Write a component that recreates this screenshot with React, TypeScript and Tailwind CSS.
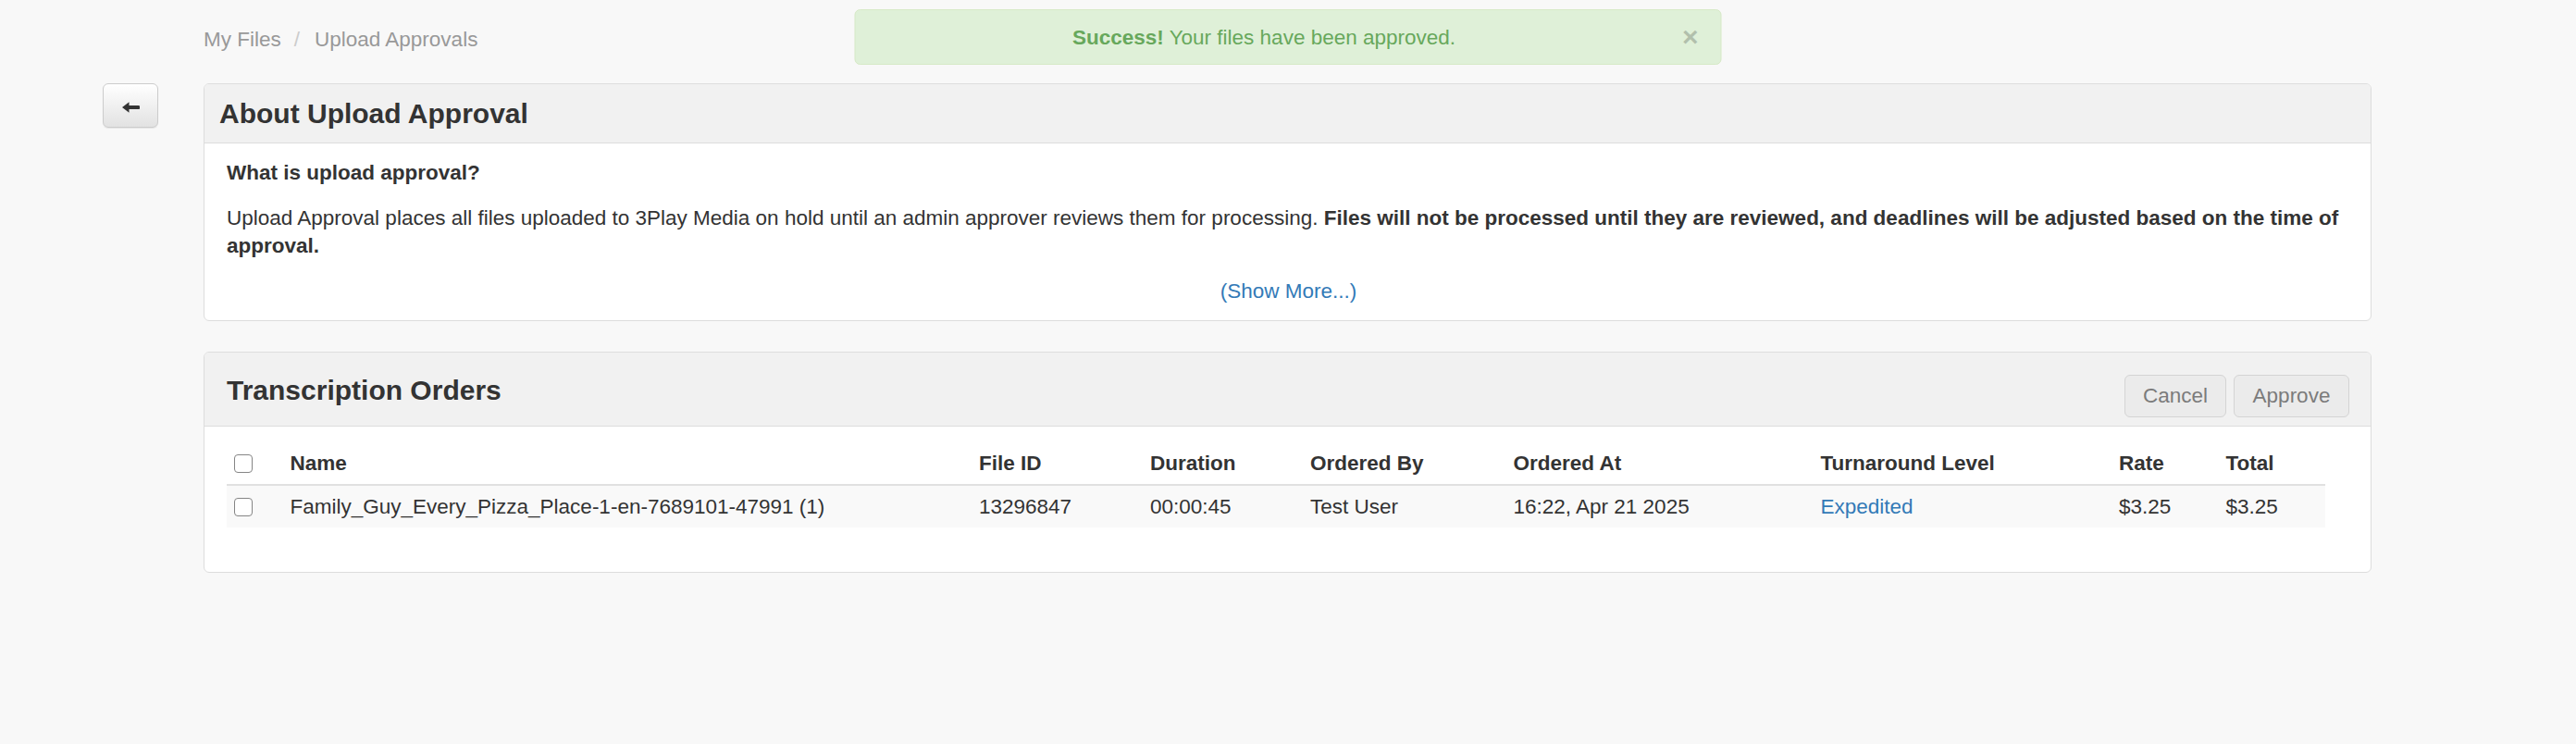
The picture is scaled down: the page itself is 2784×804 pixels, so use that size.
import React from "react";

const cols =
  "grid grid-cols-[61px_744.5px_185px_173px_219.5px_332px_322.5px_115.5px_115px]";

function Box() {
  return (
    <span className="block w-[20px] h-[20px] rounded-[4px] border border-[#858585] bg-white" />
  );
}

export default function App() {
  const headers = [
    "Name",
    "File ID",
    "Duration",
    "Ordered By",
    "Ordered At",
    "Turnaround Level",
    "Rate",
    "Total",
  ];
  return (
    <div className="relative min-h-[804px] w-[2784px] bg-[#f8f8f8] font-['Liberation_Sans',Arial,sans-serif] text-[22.5px] text-[#333]">
      {/* alert overlay */}
      <div className="absolute top-[10px] left-1/2 -translate-x-1/2 w-[937px] h-[60px] rounded-[6px] border border-[#d6e9c6] bg-[#dff0d8] text-[#67a85c] flex items-center justify-center pl-[30px] pr-[82px]">
        <span className="leading-[30px] pt-[1px]">
          <strong className="font-bold">Success!</strong> Your files have been approved.
        </span>
        <span className="absolute right-[24px] inset-y-0 flex items-center text-[30px] font-bold leading-none text-black opacity-20">
          ×
        </span>
      </div>

      <div className="flex">
        <div className="w-[220px] shrink-0 pt-[90px] pl-[111px]">
          <button className="w-[60px] h-[48px] rounded-[6px] border border-[#cccccc] bg-gradient-to-b from-white to-[#e2e2e2] shadow-[0_1px_1px_rgba(0,0,0,0.075)] flex items-center justify-center pt-[4px]">
            <svg width="19" height="12" viewBox="0 0 19 12">
              <path
                d="M0 6 L7.5 0.3 L7.5 3.9 L17.8 3.9 Q19 3.9 19 5.1 L19 6.9 Q19 8.1 17.8 8.1 L7.5 8.1 L7.5 11.7 Z"
                fill="#333"
              />
            </svg>
          </button>
        </div>

        <div className="w-[2343px] shrink-0">
          {/* breadcrumb */}
          <div className="pt-[28px] mb-[32px] leading-[30px] flex text-[#999]">
            <span>My Files</span>
            <span className="ml-[14px] mr-[16px] text-[#cccccc]">/</span>
            <span>Upload Approvals</span>
          </div>

          {/* panel 1 */}
          <div className="rounded-[6px] border border-[#dddddd] bg-white overflow-hidden">
            <div className="h-[64px] bg-[#f1f1f1] border-b border-[#dddddd] flex items-center pl-[16px]">
              <h3 className="text-[30px] font-bold leading-[34px] text-[#333]">About Upload Approval</h3>
            </div>
            <div className="pt-[17px] pb-[16px] pl-[24px] pr-[22px]">
              <div className="font-bold leading-[30px]">What is upload approval?</div>
              <p className="mt-[19px] leading-[30px]">
                Upload Approval places all files uploaded to 3Play Media on hold until an admin approver
                reviews them for processing.{" "}
                <strong className="font-bold">
                  Files will not be processed until they are reviewed, and deadlines will be adjusted
                  based on the time of approval.
                </strong>
              </p>
              <div className="mt-[19px] leading-[30px] text-center">
                <a className="text-[#337ab7]">(Show More...)</a>
              </div>
            </div>
          </div>

          {/* panel 2 */}
          <div className="mt-[33px] rounded-[6px] border border-[#dddddd] bg-white overflow-hidden">
            <div className="h-[80px] bg-[#f1f1f1] border-b border-[#dddddd] flex justify-between pl-[24px] pr-[23px]">
              <div className="flex items-center pt-[2px]">
                <h3 className="text-[30px] font-bold leading-[34px] text-[#333]">Transcription Orders</h3>
              </div>
              <div className="pt-[24px] flex gap-[8px] items-start">
                <button className="w-[110px] h-[46px] rounded-[6px] border border-[#d4d4d4] bg-[#ebebeb] text-[#7b7b7b] leading-[30px]">
                  Cancel
                </button>
                <button className="w-[125px] h-[46px] rounded-[6px] border border-[#d4d4d4] bg-[#ebebeb] text-[#7b7b7b] leading-[30px]">
                  Approve
                </button>
              </div>
            </div>
            <div className="pt-[17px] pb-[48px] pl-[24px]">
              <div className="w-[2268px]">
                <div className={`${cols} h-[47px] border-b-2 border-[#e0e0e0] items-center font-bold leading-[30px]`}>
                  <div className="pl-[8px]">
                    <Box />
                  </div>
                  {headers.map((h) => (
                    <div key={h} className="px-[7.5px] whitespace-nowrap">
                      {h}
                    </div>
                  ))}
                </div>
                <div className={`${cols} h-[45px] bg-[#f9f9f9] items-center leading-[30px]`}>
                  <div className="pl-[8px]">
                    <Box />
                  </div>
                  <div className="px-[7.5px] whitespace-nowrap">
                    Family_Guy_Every_Pizza_Place-1-en-7689101-47991 (1)
                  </div>
                  <div className="px-[7.5px]">13296847</div>
                  <div className="px-[7.5px]">00:00:45</div>
                  <div className="px-[7.5px]">Test User</div>
                  <div className="px-[7.5px]">16:22, Apr 21 2025</div>
                  <div className="px-[7.5px]">
                    <a className="text-[#337ab7]">Expedited</a>
                  </div>
                  <div className="px-[7.5px]">$3.25</div>
                  <div className="px-[7.5px]">$3.25</div>
                </div>
              </div>
            </div>
          </div>
        </div>
      </div>
    </div>
  );
}
